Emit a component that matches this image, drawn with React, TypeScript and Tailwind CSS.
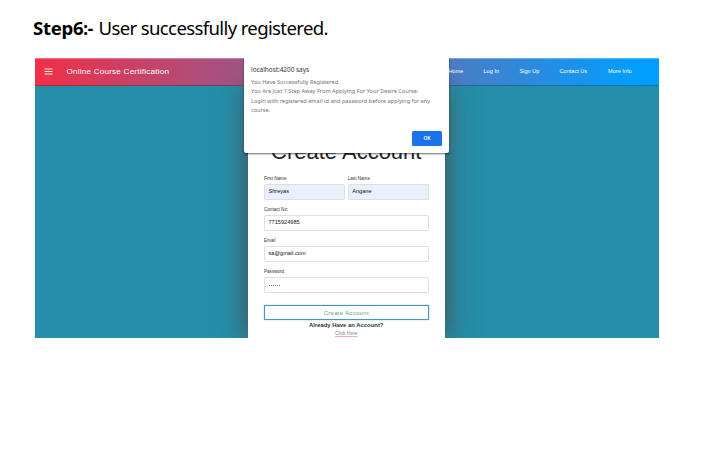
import React from "react";

const navLinks = [
  { label: "Home", width: "w-[35px]" },
  { label: "Log In", width: "w-[36px]" },
  { label: "Sign Up", width: "w-[40px]" },
  { label: "Contact Us", width: "w-[48.5px]" },
  { label: "More Info", width: "w-[51px]" },
];

const inputBase =
  "flex h-4 items-center rounded-[2px] border border-[#dedfe1] px-[3.5px] text-[5.6px] leading-none text-[#111] whitespace-nowrap";
const labelBase = "h-[7px] text-[4.6px] leading-[6px] text-[#333] whitespace-nowrap";

function Field({ label, value, filled = false }: { label: string; value: string; filled?: boolean }) {
  return (
    <div className="min-w-0 flex-1">
      <div className={labelBase}>{label}</div>
      <div className={`${inputBase} mt-[1.5px] ${filled ? "bg-[#e8f0fe]" : "bg-white"}`}>{value}</div>
    </div>
  );
}

function PasswordField() {
  return (
    <div className="min-w-0 flex-1">
      <div className={labelBase}>Password</div>
      <div className={`${inputBase} mt-[1.5px] gap-[0.5px] bg-white`}>
        {[0, 1, 2, 3, 4, 5].map((dot) => (
          <span key={dot} className="size-[1.5px] rounded-full bg-[#444]" />
        ))}
      </div>
    </div>
  );
}

function Navbar() {
  return (
    <header className="flex h-[28px] items-center border-t border-b border-t-white/30 border-b-black/25 bg-linear-to-r/srgb from-[#f12f48] to-[#009fff] to-97% text-white">
      <svg className="-mt-px ml-[9px] h-[7px] w-[9px]" viewBox="0 0 9 7" aria-hidden="true">
        <path d="M0.5 1H8.5M0.5 3.5H8.5M0.5 6H8.5" stroke="currentColor" strokeOpacity="0.9" strokeWidth="1" />
      </svg>
      <div className="ml-[13.5px] text-[8.1px] leading-none tracking-[0.22px] text-white">
        Online Course Certification
      </div>
      <nav className="ml-auto mr-0 flex text-[5.6px] leading-none text-white">
        {navLinks.map((link) => (
          <span key={link.label} className={`${link.width} whitespace-nowrap`}>
            {link.label}
          </span>
        ))}
      </nav>
    </header>
  );
}

function RegisterCard() {
  return (
    <main className="ml-[212.5px] h-[253px] w-[197.5px] bg-white px-[16.5px] shadow-[0_0_26px_rgba(85,50,45,0.75)]">
      <h1 className="-mx-4 pt-[52px] text-center text-[22px] leading-7 text-[#212529] whitespace-nowrap">
        Create Account
      </h1>
      <div className="mt-[9.5px] flex gap-[3px]">
        <Field label="First Name" value="Shreyas" filled />
        <Field label="Last Name" value="Angane" filled />
      </div>
      <div className="mt-[6.6px] flex flex-col gap-[6.6px]">
        <div className="flex"><Field label="Contact No:" value="7715924985" /></div>
        <div className="flex"><Field label="Email" value="sa@gmail.com" /></div>
        <div className="flex"><PasswordField /></div>
      </div>
      <div className="mt-3 flex h-[15px] items-center justify-center border border-[#4697b9] text-[6px] leading-none tracking-[0.3px] text-[#55a58a] shadow-[0_0_1px_rgba(70,151,185,0.8)]">
        Create Account
      </div>
      <div className="mt-[1.5px] text-center text-[5.9px] leading-[7px] font-bold text-[#333]">Already Have an Account?</div>
      <div className="mt-[1.5px] text-center text-[4.9px] leading-[8px] text-[#888] underline decoration-[#e0709a]/60">Click Here</div>
    </main>
  );
}

function AlertDialog() {
  return (
    <div className="absolute -top-[1px] left-[209px] h-[96px] w-[205px] rounded-b-[2px] bg-white px-[7px] pt-[8px] font-['Noto_Sans',sans-serif] shadow-[0_1px_2px_rgba(0,0,0,0.6)]">
      <div className="text-[6.4px] leading-[9px] text-[#333] whitespace-nowrap">localhost:4200 says</div>
      <div className="mt-[4px] text-[5.6px] leading-[9.3px] text-[#6f7073] whitespace-nowrap">
        <div>You Have Successfully Registered.</div>
        <div>You Are Just 1 Step Away From Applying For Your Desire Course.</div>
        <div>Login with registered email id and password before applying for any</div>
        <div>course.</div>
      </div>
      <div className="mt-[15.8px] ml-auto flex h-[15px] w-[30px] items-center justify-center rounded-[1.5px] bg-[#1a73e8] text-[5px] leading-none font-semibold text-white">
        OK
      </div>
      {/* Covers the top fringe of the dialog shadow */}
      <div className="absolute inset-x-0 -top-[3px] h-[4px] bg-white" />
    </div>
  );
}

export default function App() {
  return (
    <div className="h-[456px] w-[720px] overflow-hidden bg-white pt-[16px] pl-[33px] font-['Liberation_Sans',sans-serif]">
      <div className="h-[42px] text-[18.6px] leading-6 whitespace-nowrap text-black font-['Noto_Sans',sans-serif]">
        <span className="inline-block w-[65.5px] font-bold tracking-[-0.3px]">Step6<span className="text-[17px]">:-</span></span>
        <span className="tracking-[-0.65px]">User successfully registered.</span>
      </div>
      <div className="relative ml-[2px] w-[624px]">
        <div className="h-[280px] overflow-hidden bg-[#258ea8]">
          <Navbar />
          <RegisterCard />
        </div>
        <AlertDialog />
      </div>
    </div>
  );
}
